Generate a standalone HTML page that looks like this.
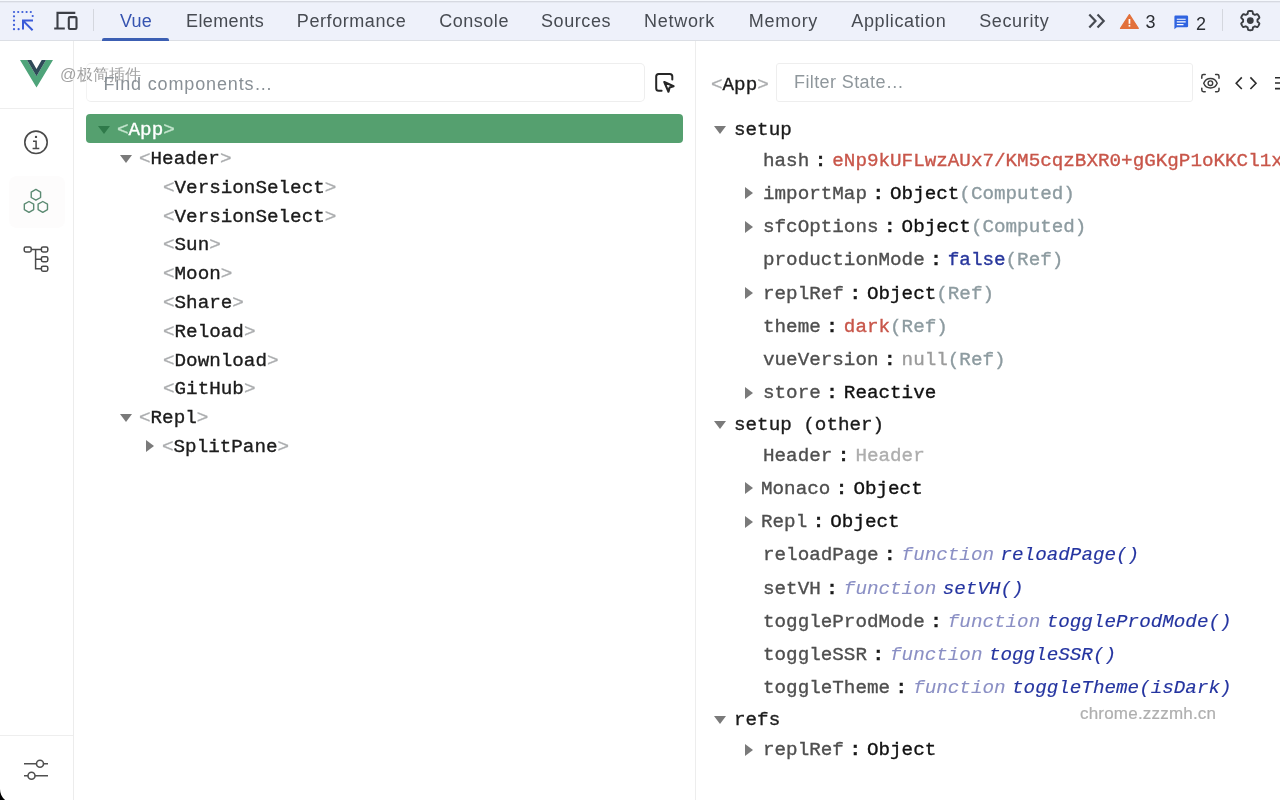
<!DOCTYPE html>
<html><head><meta charset="utf-8">
<style>
*{box-sizing:border-box;margin:0;padding:0}
html,body{width:1280px;height:800px;overflow:hidden;background:#fff}
body{position:relative;font-family:"Liberation Sans",sans-serif}
#wrap{position:absolute;left:0;top:0;width:1280px;height:800px;will-change:transform}
.abs{position:absolute}
#tb{position:absolute;left:0;top:0;width:1280px;height:41px;background:#eef1fa;border-bottom:1px solid #dcdfe5}
#tb .topline{position:absolute;left:0;top:0;width:1280px;height:3px;background:linear-gradient(#f5f8fd 0,#f5f8fd 1px,#d6d9e1 1px,#d6d9e1 2px,#e6e9f1 2px)}
.tab{position:absolute;top:0;height:40px;line-height:43px;font-size:18px;color:#474b52;letter-spacing:0.25px;white-space:nowrap}
.sep{position:absolute;top:9px;width:1px;height:22px;background:#d4d7de}
#side{position:absolute;left:0;top:41px;width:74px;height:759px;border-right:1px solid #ececec;background:#fff}
.hsep{position:absolute;left:0;width:73px;height:1px;background:#eeeeee}
.mono{font-family:"Liberation Mono",monospace;font-size:19.25px;white-space:nowrap;-webkit-text-stroke:0.35px currentColor}
.row{position:absolute;height:29px;line-height:33px}
.ab{color:#a9abad}
.tn{color:#1c1c1c}
.tri{position:absolute;width:0;height:0}
.td{border-left:6px solid transparent;border-right:6px solid transparent;border-top:8px solid #7a7a7a}
.tr{border-top:6px solid transparent;border-bottom:6px solid transparent;border-left:8px solid #7a7a7a}
#divider{position:absolute;left:695px;top:41px;width:1px;height:759px;background:#ededed}
.drow{position:absolute;height:33px;line-height:37px}
.k{color:#4f4f4f}
.c{color:#1a1a1a;margin:0 6px 0 5.5px;font-weight:bold}
.v{color:#111}
.red{color:#c8564a}
.gry{color:#8d9ba0}
.blu{color:#27369c}
.nul{color:#9b9b9b}
.fn{color:#8a8fc4;font-style:italic;-webkit-text-stroke:0.1px currentColor}
.fnn{color:#2434a0;font-style:italic;margin-left:6.5px;-webkit-text-stroke:0.15px currentColor}
</style></head><body><div id="wrap">

<!-- toolbar -->
<div id="tb">
  <div class="topline"></div>
  <div class="tab" style="left:120px;color:#3553b0">Vue</div>
  <div class="abs" style="left:102px;top:38px;width:67px;height:3px;background:#3c5fb3;border-radius:2px 2px 0 0"></div>
  <div class="tab" style="left:186px;letter-spacing:0.39px">Elements</div>
  <div class="tab" style="left:296.8px;letter-spacing:0.58px">Performance</div>
  <div class="tab" style="left:439.2px;letter-spacing:0.53px">Console</div>
  <div class="tab" style="left:541px;letter-spacing:0.58px">Sources</div>
  <div class="tab" style="left:644px;letter-spacing:0.72px">Network</div>
  <div class="tab" style="left:748.8px;letter-spacing:0.71px">Memory</div>
  <div class="tab" style="left:851.3px;letter-spacing:0.63px">Application</div>
  <div class="tab" style="left:979.2px;letter-spacing:0.64px">Security</div>
  <div class="sep" style="left:93px"></div>
  <div class="sep" style="left:1222px"></div>

  <!-- inspect icon -->
  <svg class="abs" style="left:10px;top:8px" width="28" height="26" viewBox="10 8 28 26">
    <g fill="#3a5bd9">
      <circle cx="14" cy="12" r="1.1"/><circle cx="18.2" cy="12" r="1.1"/><circle cx="22.4" cy="12" r="1.1"/><circle cx="26.6" cy="12" r="1.1"/><circle cx="30.8" cy="12" r="1.1"/>
      <circle cx="14" cy="16.3" r="1.1"/><circle cx="14" cy="20.6" r="1.1"/><circle cx="14" cy="24.9" r="1.1"/><circle cx="14" cy="29.2" r="1.1"/>
      <circle cx="18.6" cy="29.2" r="1.1"/><circle cx="32.7" cy="16" r="1.1"/>
    </g>
    <path d="M23 29.6V20.6H33 M23 20.6L32.6 30.2" stroke="#3a5bd9" stroke-width="2" fill="none"/>
  </svg>
  <!-- device icon -->
  <svg class="abs" style="left:50px;top:8px" width="32" height="26" viewBox="50 8 32 26">
    <path d="M75.3 12.9H57.5V28.5 M54.2 28.5H64.8" stroke="#3c3f46" stroke-width="2.1" fill="none"/>
    <rect x="68.8" y="17.1" width="7.7" height="11.9" rx="1.2" stroke="#3c3f46" stroke-width="2.1" fill="none"/>
  </svg>
  <!-- chevrons -->
  <svg class="abs" style="left:1084px;top:10px" width="26" height="22" viewBox="1084 10 26 22">
    <path d="M1089.3 14.5L1095.5 21L1089.3 27.5 M1097.5 14.5L1103.7 21L1097.5 27.5" stroke="#474b52" stroke-width="2.2" fill="none"/>
  </svg>
  <!-- warning -->
  <svg class="abs" style="left:1118px;top:12px" width="24" height="20" viewBox="1118 12 24 20">
    <path d="M1129.4 14.6L1138.3 28.4H1120.5Z" fill="#e2703a" stroke="#e2703a" stroke-width="1.2" stroke-linejoin="round"/>
    <rect x="1128.6" y="19" width="1.7" height="4.8" fill="#fff"/>
    <rect x="1128.6" y="24.9" width="1.7" height="1.7" fill="#fff"/>
  </svg>
  <!-- message -->
  <svg class="abs" style="left:1172px;top:13px" width="18" height="18" viewBox="1172 13 18 18">
    <path d="M1175.4 15.6H1186.9Q1188.1 15.6 1188.1 16.8V26Q1188.1 27.2 1186.9 27.2H1176.8L1174.4 29.2V16.8Q1174.4 15.6 1175.4 15.6Z" fill="#3064e0"/>
    <path d="M1176.8 19.2H1185.7M1176.8 21.9H1185.7M1176.8 24.6H1183.5" stroke="#fff" stroke-width="1.1"/>
  </svg>
  <!-- gear -->
  <svg class="abs" style="left:1237px;top:8px" width="27" height="27" viewBox="1237 8 27 27">
    <g transform="translate(1250.3 20.6)">
      <path id="gp" d="M7.20 0.00 L7.19 0.38 L7.16 0.75 L7.27 1.15 L7.91 1.68 L8.69 2.33 L9.09 2.95 L8.96 3.44 L8.77 3.90 L8.55 4.36 L8.31 4.80 L8.05 5.23 L7.77 5.64 L7.46 6.04 L7.10 6.40 L6.36 6.36 L5.41 6.01 L4.63 5.72 L4.23 5.82 L3.92 6.04 L3.60 6.24 L3.27 6.42 L2.93 6.58 L2.64 6.87 L2.50 7.69 L2.33 8.69 L1.99 9.35 L1.50 9.48 L1.00 9.55 L0.50 9.59 L0.00 9.60 L-0.50 9.59 L-1.00 9.55 L-1.50 9.48 L-1.99 9.35 L-2.33 8.69 L-2.50 7.69 L-2.64 6.87 L-2.93 6.58 L-3.27 6.42 L-3.60 6.24 L-3.92 6.04 L-4.23 5.82 L-4.63 5.72 L-5.41 6.01 L-6.36 6.36 L-7.10 6.40 L-7.46 6.04 L-7.77 5.64 L-8.05 5.23 L-8.31 4.80 L-8.55 4.36 L-8.77 3.90 L-8.96 3.44 L-9.09 2.95 L-8.69 2.33 L-7.91 1.68 L-7.27 1.15 L-7.16 0.75 L-7.19 0.38 L-7.20 0.00 L-7.19 -0.38 L-7.16 -0.75 L-7.27 -1.15 L-7.91 -1.68 L-8.69 -2.33 L-9.09 -2.95 L-8.96 -3.44 L-8.77 -3.90 L-8.55 -4.36 L-8.31 -4.80 L-8.05 -5.23 L-7.77 -5.64 L-7.46 -6.04 L-7.10 -6.40 L-6.36 -6.36 L-5.41 -6.01 L-4.63 -5.72 L-4.23 -5.82 L-3.92 -6.04 L-3.60 -6.24 L-3.27 -6.42 L-2.93 -6.58 L-2.64 -6.87 L-2.50 -7.69 L-2.33 -8.69 L-1.99 -9.35 L-1.50 -9.48 L-1.00 -9.55 L-0.50 -9.59 L-0.00 -9.60 L0.50 -9.59 L1.00 -9.55 L1.50 -9.48 L1.99 -9.35 L2.33 -8.69 L2.50 -7.69 L2.64 -6.87 L2.93 -6.58 L3.27 -6.42 L3.60 -6.24 L3.92 -6.04 L4.23 -5.82 L4.63 -5.72 L5.41 -6.01 L6.36 -6.36 L7.10 -6.40 L7.46 -6.04 L7.77 -5.64 L8.05 -5.23 L8.31 -4.80 L8.55 -4.36 L8.77 -3.90 L8.96 -3.44 L9.09 -2.95 L8.69 -2.33 L7.91 -1.68 L7.27 -1.15 L7.16 -0.75 L7.19 -0.38Z" fill="none" stroke="#3a3d42" stroke-width="1.9" stroke-linejoin="round"/>
      <circle r="3.4" fill="#3a3d42"/>
    </g>
  </svg>
  <div class="tab" style="left:1145.5px;top:1px;color:#2b2e33">3</div>
  <div class="tab" style="left:1196px;top:2.5px;color:#2b2e33">2</div>
</div>

<!-- sidebar -->
<div id="side">
  <div class="hsep" style="top:67px"></div>
  <div class="hsep" style="top:694px"></div>
</div>
<!-- vue logo -->
<svg class="abs" style="left:19px;top:59px" width="36" height="30" viewBox="19 59 36 30">
  <path d="M20 60H27L36.5 76.2L46 60H53L36.5 87.5Z" fill="#4fa47a"/>
  <path d="M27 60H31.3L36.5 69L41.7 60H46L36.5 76.2Z" fill="#2f4a58"/>
</svg>
<!-- info icon -->
<svg class="abs" style="left:20px;top:126px" width="32" height="32" viewBox="20 126 32 32">
  <circle cx="36" cy="142.3" r="11.2" stroke="#4a4a4a" stroke-width="1.6" fill="none"/>
  <circle cx="36" cy="136.9" r="1.2" fill="#4a4a4a"/>
  <path d="M33 141.3H36.1V148.5 M32.6 148.6H39.3" stroke="#4a4a4a" stroke-width="1.5" fill="none"/>
</svg>
<!-- components icon -->
<div class="abs" style="left:9px;top:176px;width:56px;height:52px;background:#fdfcfc;border-radius:8px"></div>
<svg class="abs" style="left:20px;top:184px" width="32" height="32" viewBox="20 184 32 32">
  <g stroke="#5b8a72" stroke-width="1.4" fill="none" stroke-linejoin="round">
    <path d="M35.90 189.40 L40.58 192.10 L40.58 197.50 L35.90 200.20 L31.22 197.50 L31.22 192.10Z"/>
    <path d="M29.00 201.50 L33.68 204.20 L33.68 209.60 L29.00 212.30 L24.32 209.60 L24.32 204.20Z"/>
    <path d="M42.80 201.50 L47.48 204.20 L47.48 209.60 L42.80 212.30 L38.12 209.60 L38.12 204.20Z"/>
  </g>
</svg>
<!-- tree icon -->
<svg class="abs" style="left:20px;top:240px" width="34" height="36" viewBox="20 240 34 36">
  <g stroke="#4a4a4a" stroke-width="1.5" fill="none">
    <rect x="24.2" y="246.9" width="7" height="5" rx="1.6"/>
    <rect x="41.4" y="246.9" width="6.4" height="5" rx="1.6"/>
    <rect x="41.4" y="256.7" width="6.4" height="5" rx="1.6"/>
    <rect x="41.4" y="266.2" width="6.4" height="5" rx="1.6"/>
    <path d="M31.2 249.4H41.4 M35.6 249.4V268.7H41.4 M35.6 259.2H41.4"/>
  </g>
</svg>
<!-- settings icon -->
<svg class="abs" style="left:20px;top:756px" width="34" height="28" viewBox="20 756 34 28">
  <g stroke="#505050" stroke-width="1.6" fill="none">
    <path d="M24 763.7H36.4 M43.6 763.7H48 M24 775.8H28 M35 775.8H48"/>
    <circle cx="40" cy="763.7" r="3.5"/>
    <circle cx="31.5" cy="775.8" r="3.5"/>
  </g>
</svg>
<!-- window corner -->
<svg class="abs" style="left:0;top:780px" width="20" height="20" viewBox="0 780 20 20">
  <path d="M0 789A14.6 14.6 0 0 0 5.04 800L0 800Z" fill="#000"/>
</svg>
<!-- watermark -->
<div class="abs" style="left:60px;top:63px;font-size:16.3px;line-height:22px;color:#a3a3a3;white-space:nowrap">@极简插件</div>


<!-- search -->
<div class="abs" style="left:86px;top:63px;width:559px;height:39px;border:1px solid #eeeeee;border-left-color:#f3f3f3;border-radius:5px"></div>
<div class="abs" style="left:103.5px;top:64.5px;height:39px;line-height:39px;font-size:18px;letter-spacing:0.85px;color:#899096;white-space:nowrap">Find components…</div>
<svg class="abs" style="left:650px;top:68px" width="30" height="30" viewBox="650 68 30 30">
  <path d="M661.6 90.8H658.7Q656.2 90.8 656.2 88.3V76.5Q656.2 74 658.7 74H669.8Q672.3 74 672.3 76.5V79.6" stroke="#262626" stroke-width="2" fill="none" stroke-linecap="round"/>
  <path d="M664.3 82L673.6 86.3L669.6 87.6L668.5 91.8Z" stroke="#262626" stroke-width="2.1" fill="none" stroke-linejoin="round"/>
</svg>

<!-- tree -->
<div class="abs" style="left:86px;top:114.3px;width:597px;height:28.4px;background:#55a06f;border-radius:4px"></div>
<div class="tri td" style="left:98px;top:126.4px;border-top-color:#2f7a4a"></div>
<div class="row mono" style="left:117px;top:114px"><span style="color:#c6e6cf">&lt;</span><span style="color:#fff">App</span><span style="color:#c6e6cf">&gt;</span></div>
<div class="tri td" style="left:120px;top:155.2px"></div>
<div class="row mono" style="left:139px;top:143px"><span class="ab">&lt;</span><span class="tn">Header</span><span class="ab">&gt;</span></div>
<div class="row mono" style="left:163px;top:172px"><span class="ab">&lt;</span><span class="tn">VersionSelect</span><span class="ab">&gt;</span></div>
<div class="row mono" style="left:163px;top:201px"><span class="ab">&lt;</span><span class="tn">VersionSelect</span><span class="ab">&gt;</span></div>
<div class="row mono" style="left:163px;top:229px"><span class="ab">&lt;</span><span class="tn">Sun</span><span class="ab">&gt;</span></div>
<div class="row mono" style="left:163px;top:258px"><span class="ab">&lt;</span><span class="tn">Moon</span><span class="ab">&gt;</span></div>
<div class="row mono" style="left:163px;top:287px"><span class="ab">&lt;</span><span class="tn">Share</span><span class="ab">&gt;</span></div>
<div class="row mono" style="left:163px;top:316px"><span class="ab">&lt;</span><span class="tn">Reload</span><span class="ab">&gt;</span></div>
<div class="row mono" style="left:163px;top:345px"><span class="ab">&lt;</span><span class="tn">Download</span><span class="ab">&gt;</span></div>
<div class="row mono" style="left:163px;top:373px"><span class="ab">&lt;</span><span class="tn">GitHub</span><span class="ab">&gt;</span></div>
<div class="tri td" style="left:120px;top:414.4px"></div>
<div class="row mono" style="left:139px;top:402px"><span class="ab">&lt;</span><span class="tn">Repl</span><span class="ab">&gt;</span></div>
<div class="tri tr" style="left:146px;top:440.2px"></div>
<div class="row mono" style="left:162px;top:431px"><span class="ab">&lt;</span><span class="tn">SplitPane</span><span class="ab">&gt;</span></div>

<div id="divider"></div>

<!-- right pane header -->
<div class="row mono" style="left:711px;top:69px"><span class="ab">&lt;</span><span class="tn">App</span><span class="ab">&gt;</span></div>
<div class="abs" style="left:776px;top:63px;width:417px;height:39px;border:1px solid #eeeeee;border-radius:3px"></div>
<div class="abs" style="left:794px;top:63px;height:39px;line-height:39px;font-size:18px;letter-spacing:0.4px;color:#8f979c;white-space:nowrap">Filter State…</div>
<svg class="abs" style="left:1198px;top:70px" width="26" height="26" viewBox="1198 70 26 26">
  <g stroke="#3c3c3c" stroke-width="1.5" fill="none" stroke-linecap="round">
    <path d="M1201.8 78.2V76.2Q1201.8 74.5 1203.5 74.5H1205.2 M1215.6 74.5H1217.3Q1219 74.5 1219 76.2V78.2 M1219 88.2V90.1Q1219 91.8 1217.3 91.8H1215.6 M1205.2 91.8H1203.5Q1201.8 91.8 1201.8 90.1V88.2"/>
    <path d="M1203.7 83.2C1206.2 76.9 1214.8 76.9 1217.2 83.2C1214.8 89.5 1206.2 89.5 1203.7 83.2Z" stroke-width="1.4"/>
    <circle cx="1210.4" cy="83.2" r="2.3" stroke-width="1.4"/>
  </g>
</svg>
<svg class="abs" style="left:1230px;top:72px" width="32" height="22" viewBox="1230 72 32 22">
  <path d="M1241.8 77.4L1236.2 83.2L1241.8 89 M1250.4 77.4L1256 83.2L1250.4 89" stroke="#2b2b2b" stroke-width="1.6" fill="none"/>
</svg>
<svg class="abs" style="left:1272px;top:72px" width="8" height="22" viewBox="1272 72 8 22">
  <path d="M1275 77.7H1280 M1275 83H1280 M1275 88.6H1280" stroke="#2b2b2b" stroke-width="1.6" fill="none"/>
</svg>

<!-- state -->
<div class="tri td" style="left:714px;top:126.4px"></div>
<div class="row mono" style="left:734px;top:114px"><span class="tn">setup</span></div>
<div class="drow mono" style="left:763px;top:143px"><span class="k">hash</span><span class="c">:</span><span class="red">eNp9kUFLwzAUx7/KM5cqzBXR0+gGKgP1oKKCl1xG</span></div>
<div class="tri tr" style="left:745px;top:187.4px"></div>
<div class="drow mono" style="left:763px;top:176px"><span class="k">importMap</span><span class="c">:</span><span class="v">Object</span><span class="gry">(Computed)</span></div>
<div class="tri tr" style="left:745px;top:220.6px"></div>
<div class="drow mono" style="left:763px;top:209px"><span class="k">sfcOptions</span><span class="c">:</span><span class="v">Object</span><span class="gry">(Computed)</span></div>
<div class="drow mono" style="left:763px;top:242px"><span class="k">productionMode</span><span class="c">:</span><span class="blu">false</span><span class="gry">(Ref)</span></div>
<div class="tri tr" style="left:745px;top:287.1px"></div>
<div class="drow mono" style="left:763px;top:276px"><span class="k">replRef</span><span class="c">:</span><span class="v">Object</span><span class="gry">(Ref)</span></div>
<div class="drow mono" style="left:763px;top:309px"><span class="k">theme</span><span class="c">:</span><span class="red">dark</span><span class="gry">(Ref)</span></div>
<div class="drow mono" style="left:763px;top:342px"><span class="k">vueVersion</span><span class="c">:</span><span class="nul">null</span><span class="gry">(Ref)</span></div>
<div class="tri tr" style="left:745px;top:386.9px"></div>
<div class="drow mono" style="left:763px;top:375px"><span class="k">store</span><span class="c">:</span><span class="v">Reactive</span></div>
<div class="tri td" style="left:714px;top:421.3px"></div>
<div class="row mono" style="left:734px;top:409px"><span class="tn">setup (other)</span></div>
<div class="drow mono" style="left:763px;top:438px"><span class="k">Header</span><span class="c">:</span><span style="color:#aeaeae">Header</span></div>
<div class="tri tr" style="left:745px;top:482.2px"></div>
<div class="drow mono" style="left:761px;top:471px"><span class="k">Monaco</span><span class="c">:</span><span class="v">Object</span></div>
<div class="tri tr" style="left:745px;top:515.5px"></div>
<div class="drow mono" style="left:761px;top:504px"><span class="k">Repl</span><span class="c">:</span><span class="v">Object</span></div>
<div class="drow mono" style="left:763px;top:537px"><span class="k">reloadPage</span><span class="c">:</span><span class="fn">function</span><span class="fnn">reloadPage()</span></div>
<div class="drow mono" style="left:763px;top:571px"><span class="k">setVH</span><span class="c">:</span><span class="fn">function</span><span class="fnn">setVH()</span></div>
<div class="drow mono" style="left:763px;top:604px"><span class="k">toggleProdMode</span><span class="c">:</span><span class="fn">function</span><span class="fnn">toggleProdMode()</span></div>
<div class="drow mono" style="left:763px;top:637px"><span class="k">toggleSSR</span><span class="c">:</span><span class="fn">function</span><span class="fnn">toggleSSR()</span></div>
<div class="drow mono" style="left:763px;top:670px"><span class="k">toggleTheme</span><span class="c">:</span><span class="fn">function</span><span class="fnn">toggleTheme(isDark)</span></div>
<div class="tri td" style="left:714px;top:716.2px"></div>
<div class="row mono" style="left:734px;top:704px"><span class="tn">refs</span></div>
<div class="tri tr" style="left:745px;top:743.9px"></div>
<div class="drow mono" style="left:763px;top:732px"><span class="k">replRef</span><span class="c">:</span><span class="v">Object</span></div>

<div class="abs" style="left:1080px;top:704px;font-size:17px;line-height:20px;letter-spacing:0.2px;color:#afafaf;white-space:nowrap;-webkit-text-stroke:0.2px currentColor">chrome.zzzmh.cn</div>


</div></body></html>
